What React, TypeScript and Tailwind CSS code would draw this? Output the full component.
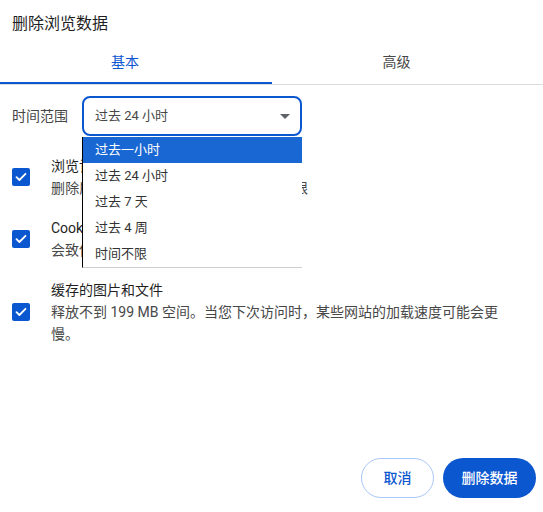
import React from "react";

const Check = () => (
  <div className="w-[18px] h-[18px] rounded-[2px] bg-[#0b57d0] flex items-center justify-center shrink-0">
    <svg width="12" height="10" viewBox="0 0 12 10" fill="none">
      <path d="M1.5 5.2 L4.4 8 L10.5 1.8" stroke="white" strokeWidth="1.8" strokeLinecap="round" strokeLinejoin="round" />
    </svg>
  </div>
);

const Row = ({ title, lines, tight }: { title: string; lines: string; tight?: boolean }) => (
  <div className="flex items-center pl-3 pr-8">
    <Check />
    <div className="ml-[21px] leading-[22px] text-[14px]">
      <div className="text-[#1f1f1f]">{title}</div>
      <div className={tight ? "text-[#474747] tracking-[0.3px]" : "text-[#474747]"}>{lines}</div>
    </div>
  </div>
);

export default function App() {
  const items = ["过去一小时", "过去 24 小时", "过去 7 天", "过去 4 周", "时间不限"];
  return (
    <div
      className="relative w-[543px] h-[512px] bg-white flex flex-col"
      style={{ fontFamily: '"Roboto", "Noto Sans CJK SC", sans-serif' }}
    >
      <div className="pl-3 pt-[14px] h-[40px] text-[16px] leading-[20px] text-[#1f1f1f]">删除浏览数据</div>
      <div className="flex h-[45px] border-b border-[#dadce0]">
        <div className="relative w-[272px] flex items-center justify-center pr-[22px] text-[14px] text-[#0b57d0]">
          基本
          <div className="absolute left-0 right-0 bottom-0 h-[2px] bg-[#0b57d0]" />
        </div>
        <div className="flex-1 flex items-center justify-center pr-[22px] text-[14px] text-[#474747]">高级</div>
      </div>
      <div className="flex items-center mt-[11px] pl-3">
        <div className="w-[70px] text-[14px] text-[#474747]">时间范围</div>
        <div className="relative w-[220px] h-[40px] border-2 border-[#0b57d0] rounded-[8px] flex items-center pl-[11px] text-[13px] text-[#474747]">
          过去 24 小时
          <svg className="absolute right-[10px] top-[16px]" width="10" height="5" viewBox="0 0 10 5">
            <path d="M0 0 L10 0 L5 5 Z" fill="#5f6368" />
          </svg>
        </div>
      </div>
      <div className="flex flex-col gap-[18px] mt-[19px]">
        <Row title="浏览记录" lines="删除所有已同步设备上的历史记录，无限" tight />
        <Row title="Cookie 及其他网站数据" lines="会致使您从大多数网站退出。" />
        <Row title="缓存的图片和文件" lines="释放不到 199 MB 空间。当您下次访问时，某些网站的加载速度可能会更慢。" />
      </div>
      <div className="mt-auto flex justify-end gap-[9px] pr-[7px] pb-[14px]">
        <button className="w-[73px] h-[40px] rounded-full border border-[#a8c7fa] text-[#0b57d0] text-[14px] font-medium">取消</button>
        <button className="w-[93px] h-[40px] rounded-full bg-[#0b57d0] text-white text-[14px] font-medium">删除数据</button>
      </div>
      <div className="absolute left-[82px] top-[137px] w-[220px] bg-white border-l border-l-black border-b border-b-[#cfcfcf] text-[13px] text-[#333]">
        {items.map((t, i) => (
          <div
            key={t}
            className={
              i === 0
                ? "h-[26px] pl-[12px] flex items-center bg-[#1967d2] text-white"
                : "h-[26px] pl-[12px] flex items-center"
            }
          >
            {t}
          </div>
        ))}
      </div>
    </div>
  );
}
